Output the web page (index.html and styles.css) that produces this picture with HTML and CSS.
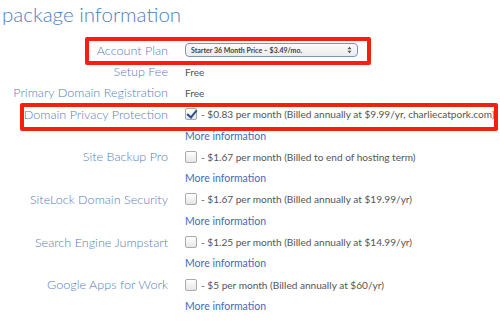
FILE: index.html
```html
<!DOCTYPE html>
<html lang="en">

<head>
    <meta charset="UTF-8">
    <title>Package Information</title>
    <link rel="stylesheet" href="styles.css">
</head>

<body>
    <h2 class="title">package information</h2>

    <div class="package">
        <!-- Account plan -->
        <div class="row">
            <label class="label" for="plan">Account Plan</label>
            <div class="value">
                <div class="select" id="plan">
                    <span>Starter 36 Month Price &ndash; $3.49/mo.</span>
                    <svg class="arrows" width="5" height="8" viewBox="0 0 5 8">
                        <path d="M0.5 3.2 L2.5 0.8 L4.5 3.2 Z M0.5 4.8 L2.5 7.2 L4.5 4.8 Z" fill="#555"/>
                    </svg>
                </div>
            </div>
        </div>

        <div class="row">
            <span class="label">Setup Fee</span>
            <span class="value">Free</span>
        </div>

        <div class="row">
            <span class="label">Primary Domain Registration</span>
            <span class="value">Free</span>
        </div>

        <!-- Extras -->
        <div class="row">
            <span class="label">Domain Privacy Protection</span>
            <span class="value"><span class="check checked"></span> - $0.83 per month (Billed annually at $9.99/yr, charliecatpork.com)</span>
        </div>
        <div class="row"><span></span><a class="more" href="#">More information</a></div>

        <div class="row">
            <span class="label">Site Backup Pro</span>
            <span class="value"><span class="check"></span> - $1.67 per month (Billed to end of hosting term)</span>
        </div>
        <div class="row"><span></span><a class="more" href="#">More information</a></div>

        <div class="row">
            <span class="label">SiteLock Domain Security</span>
            <span class="value"><span class="check"></span> - $1.67 per month (Billed annually at $19.99/yr)</span>
        </div>
        <div class="row"><span></span><a class="more" href="#">More information</a></div>

        <div class="row">
            <span class="label">Search Engine Jumpstart</span>
            <span class="value"><span class="check"></span> - $1.25 per month (Billed annually at $14.99/yr)</span>
        </div>
        <div class="row"><span></span><a class="more" href="#">More information</a></div>

        <div class="row">
            <span class="label">Google Apps for Work</span>
            <span class="value"><span class="check"></span> - $5 per month (Billed annually at $60/yr)</span>
        </div>
        <div class="row"><span></span><a class="more" href="#">More information</a></div>
    </div>

    <!-- Red annotation boxes -->
    <div class="mark mark-plan"></div>
    <div class="mark mark-privacy"></div>
</body>

</html>
```

FILE: styles.css
```css
body {
    margin: 0;
    font-family: 'Lato', 'Open Sans', sans-serif;
    background-color: #fff;
    color: #555;
    position: relative;
    overflow: hidden;
}

.title {
    margin: 0;
    padding: 0 0 0 2px;
    height: 39px;
    font-size: 20.5px;
    font-weight: 300;
    line-height: 28px;
    color: #4f7ec2;
}

.row {
    display: grid;
    grid-template-columns: 168px 1fr;
    column-gap: 17px;
    align-items: center;
    height: 21.3px;
}

.row:first-child {
    height: 22px;
}

.label {
    text-align: right;
    font-size: 12.6px;
    font-weight: 300;
    color: #5a80bb;
    white-space: nowrap;
}

.value {
    font-size: 10.1px;
    color: #555;
    white-space: nowrap;
    display: flex;
    align-items: center;
    gap: 2px;
}

.select {
    width: 161px;
    height: 12px;
    border: 1px solid #7f93b5;
    border-radius: 4px;
    background: linear-gradient(#fbfbfb, #ececec);
    display: flex;
    justify-content: space-between;
    align-items: center;
    padding: 0 5px 0 5px;
    font-size: 7px;
    font-weight: 700;
    color: #444;
}

.arrows {
    display: block;
}

.check {
    display: inline-block;
    width: 10px;
    height: 10px;
    border: 1px solid #aaa;
    border-radius: 2px;
    background: linear-gradient(#fff, #e6e6e6);
    margin-right: 2px;
    position: relative;
}

.check.checked::after {
    content: '';
    position: absolute;
    left: 3px;
    top: -1px;
    width: 4px;
    height: 8px;
    border: solid #2d4f8c;
    border-width: 0 2px 2px 0;
    transform: rotate(40deg);
}

.more {
    font-size: 10.5px;
    color: #3f6bc0;
    text-decoration: none;
}

.mark {
    position: absolute;
    border: 4px solid #f41f0f;
    border-radius: 2px;
}

.mark-plan {
    left: 85px;
    top: 37px;
    width: 278px;
    height: 20px;
}

.mark-privacy {
    left: 20px;
    top: 103px;
    width: 470px;
    height: 20px;
}
```
